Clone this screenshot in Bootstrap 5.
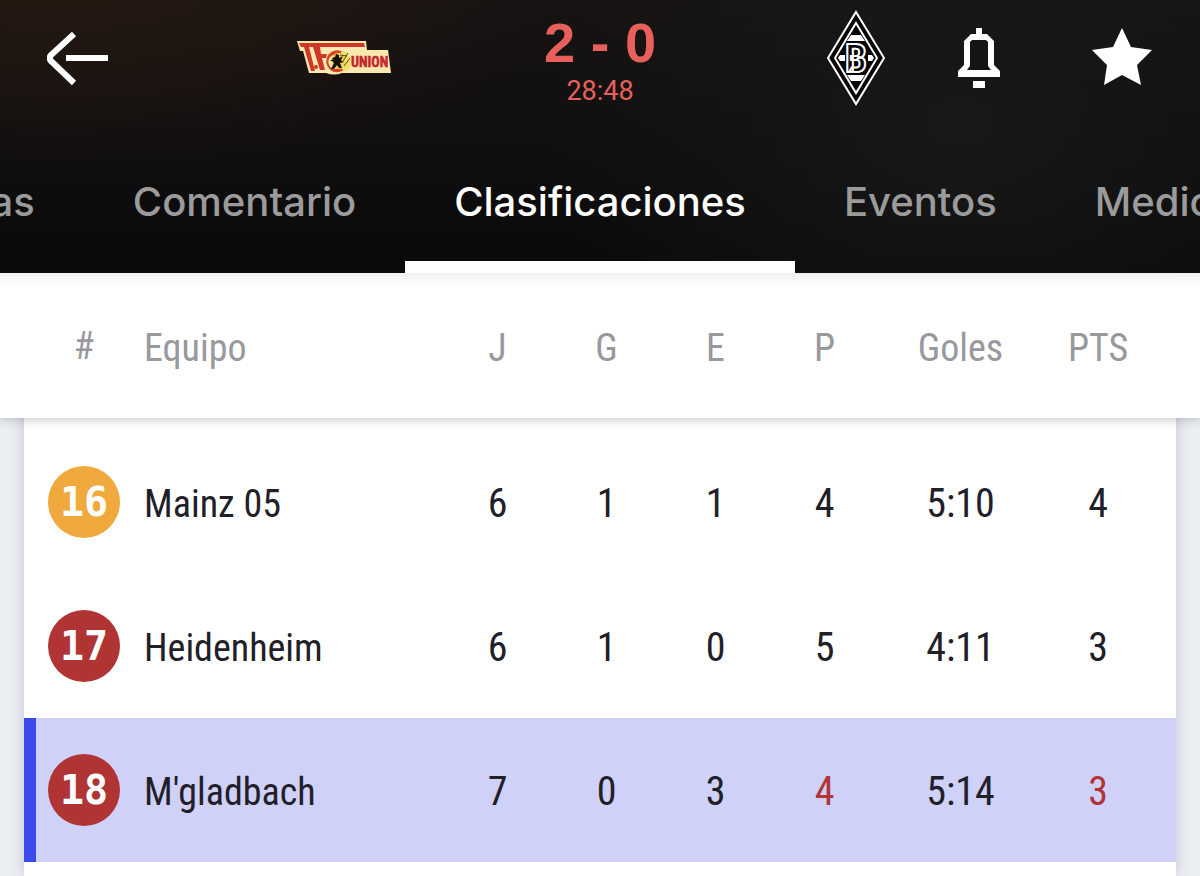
<!DOCTYPE html>
<html lang="es">
<head>
<meta charset="utf-8">
<meta name="viewport" content="width=device-width, initial-scale=1">
<title>Clasificaciones</title>
<link href="https://cdn.jsdelivr.net/npm/bootstrap@5.3.0/dist/css/bootstrap.min.css" rel="stylesheet">
<style>
  body { background: #ebeff4; font-family: Inter, Roboto, sans-serif; overflow-x: hidden; }
  .match-header {
    position: relative; z-index: 2;
    background:
      radial-gradient(ellipse 520px 200px at 5% -10%, #261910 0%, rgba(38,25,16,0) 100%),
      radial-gradient(ellipse 420px 300px at 80% 45%, #181818 0%, rgba(24,24,24,0) 100%),
      linear-gradient(#171313, #0a0a0b);
  }
  .match-bar { height: 132px; padding: 0 42px; }
  .match-bar > .side { flex: 1 1 0; height: 116px; }
  .icon-btn { width: 72px; height: 72px; padding: 0; border: 0; background: none; }
  .icon-pair { gap: 71px; }
  .team-logo { width: 96px; }
  .score-box { width: 416px; color: #e8605b; padding-top: 15px; }
  .score { font: 700 56px/56px "Liberation Sans", sans-serif; }
  .clock { font: 400 27px/40px Roboto, sans-serif; }
  .tab-side { flex: 1 1 0; min-width: 0; overflow: hidden; }
  .tab-link { flex: none; height: 141px; padding: 0 49px; line-height: 140px; font-size: 40px; font-weight: 500; color: #9b9b9b; text-decoration: none; white-space: nowrap; }
  .tab-link.active { color: #fff; box-shadow: inset 0 -12px #fff; }
  .standings-card { margin: 0 24px; background: #fff; box-shadow: 0 0 14px rgba(60,70,90,.22); }
  .standings { width: 100%; table-layout: fixed; font-family: "Roboto Condensed", "Liberation Sans Narrow", "Liberation Sans", sans-serif; font-size: 40px; line-height: 48px; color: #1f2028; text-align: center; }
  .standings th, .standings td { padding: 0; font-weight: 400; }
  .standings th { font-size: 38px; }
  .standings tr > :not(:first-child) { padding-top: 4px; }
  .standings thead tr { position: relative; z-index: 0; height: 145px; color: #98989d; }
  .standings thead th:first-child::before { content: ""; position: absolute; z-index: -1; inset: 0 -24px; background: linear-gradient(#f0eff1, #fff 12px); box-shadow: 0 2px 10px rgba(0,0,0,.2); }
  .standings tbody tr { height: 144px; }
  .standings tbody tr.first-row { height: 156px; }
  .standings .first-row > :first-child { padding-top: 12px; }
  .standings .first-row > :not(:first-child) { padding-top: 16px; }
  .standings .team { text-align: left; white-space: nowrap; }
  .standings .pts { padding-right: 22px; }
  .col-pos { width: 120px; }
  .col-num { width: 109px; }
  .col-goals { width: 163px; }
  .col-pts { width: 134px; }
  .rank { width: 72px; height: 72px; border-radius: 50%; color: #fff; background: #b03434; font: 700 40px/72px "DejaVu Sans Mono", monospace; margin: 0 auto; }
  .rank.playoff { background: #f0a93c; }
  .current { background: #cfd1f8; box-shadow: inset 12px 0 #3c4aec; }
  .live { color: #b03438; }
  .crest-text { font-family: "Roboto Condensed", "Liberation Sans Narrow", sans-serif; font-weight: 700; }
</style>
<script defer src="https://cdn.jsdelivr.net/npm/bootstrap@5.3.0/dist/js/bootstrap.bundle.min.js"></script>
</head>
<body class="d-flex flex-column min-vh-100">
<header class="match-header">
  <div class="match-bar d-flex">
    <div class="side d-flex align-items-center justify-content-between">
      <button class="icon-btn" type="button" aria-label="Volver">
        <svg width="72" height="72" viewBox="0 0 72 72" fill="none" stroke="#fff" stroke-width="6"><path d="M32 12 8 34v4l24 23M24 36h42" stroke-linejoin="bevel"/></svg>
      </button>
      <div class="team-logo">
        <svg width="96" height="40" viewBox="0 0 96 40" role="img" aria-label="1. FC Union Berlin">
          <path d="M1 3H70L71 12H92L95 35H46Q38 38 30 35H13L7 13H4Z" fill="#f9e9ae"/>
          <path d="M3 5H68L69 9H24L25 16H31L30 20H26L29 32H24L17 9H13L19 33H15L8 9H5Z" fill="#cf3829"/>
          <circle cx="20" cy="29" r="2" fill="#cf3829"/>
          <path d="M47 14A11 11 0 1 0 49 31L45 28A7 7 0 1 1 43 18Z" fill="#d4432b"/>
          <circle cx="43" cy="23" r="8" fill="#f5d646"/>
          <path d="M46 13Q53 14 54 23T48 33L45 30Q49 27 49 23T44 16Z" fill="#f1dc6c"/>
          <path d="M46 25l6-10M48 28l6-8M44 17l7 1" stroke="#5c4c12" stroke-width="1" fill="none"/>
          <path d="M36 20l3-1 1-3 3 1v3l4-2-2 4 2 2-3 1 2 5h-3l-2-3-3 4h-3l3-6-2-2h-2l3-2z" fill="#17130c"/>
          <text class="crest-text" x="55" y="29" font-size="14" fill="#c3262b" stroke="#c3262b" stroke-width=".5">UNION</text>
        </svg>
      </div>
    </div>
    <div class="score-box text-center">
      <div class="score">2 - 0</div>
      <div class="clock">28:48</div>
    </div>
    <div class="side d-flex align-items-center">
      <div class="team-logo text-center">
        <svg width="60" height="96" viewBox="0 0 60 96" role="img" aria-label="Borussia Mönchengladbach">
          <path d="M30 2 58 48 30 94 2 48Z" fill="#080808" stroke="#fff" stroke-width="2"/>
          <path d="M30 13 51 48 30 83 9 48Z" fill="#050505" stroke="#fff" stroke-width="2"/>
          <path d="M25 25H35L39 31H21ZM21 65H39L35 71H25ZM12 48l2-3h5v6h-5zM48 48l-2-3h-4v6h4z" fill="#fff"/>
          <text class="crest-text" x="30" y="62" text-anchor="middle" font-size="39" fill="#070707" stroke="#fff" stroke-width="2">B</text>
        </svg>
      </div>
      <div class="icon-pair d-flex ms-auto">
        <button class="icon-btn" type="button" aria-label="Notificaciones">
          <svg width="72" height="72" viewBox="0 0 72 72"><path d="M33 6h6v6h5l7 7v24l6 6v6H15v-6l6-6V19l7-7h5z" fill="#fff"/><path d="M29 18h14l2 2v24l3 4H24l3-4V20z" fill="#151515"/><path d="M30 59h12v7H30z" fill="#fff"/></svg>
        </button>
        <button class="icon-btn" type="button" aria-label="Favorito">
          <svg width="72" height="72" viewBox="0 0 72 72"><path d="M36 6 45 25 66 28 51 43 55 63 36 53 18 63 21 43 6 28 27 25Z" fill="#fff"/></svg>
        </button>
      </div>
    </div>
  </div>
  <nav class="d-flex" aria-label="Secciones del partido">
    <div class="tab-side d-flex justify-content-end">
      <a class="tab-link" href="#estadisticas">Estadísticas</a>
      <a class="tab-link" href="#comentario">Comentario</a>
    </div>
    <a class="tab-link active" href="#clasificaciones" aria-current="page">Clasificaciones</a>
    <div class="tab-side d-flex">
      <a class="tab-link" href="#eventos">Eventos</a>
      <a class="tab-link" href="#medios">Medios</a>
    </div>
  </nav>
</header>
<main id="clasificaciones" class="standings-card flex-grow-1">
  <table class="standings">
    <colgroup><col class="col-pos"><col><col class="col-num"><col class="col-num"><col class="col-num"><col class="col-num"><col class="col-goals"><col class="col-pts"></colgroup>
    <thead>
      <tr><th scope="col">#</th><th scope="col" class="team">Equipo</th><th scope="col">J</th><th scope="col">G</th><th scope="col">E</th><th scope="col">P</th><th scope="col">Goles</th><th scope="col" class="pts">PTS</th></tr>
    </thead>
    <tbody>
      <tr class="first-row"><td><div class="rank playoff">16</div></td><th scope="row" class="team">Mainz 05</th><td>6</td><td>1</td><td>1</td><td>4</td><td>5:10</td><td class="pts">4</td></tr>
      <tr><td><div class="rank">17</div></td><th scope="row" class="team">Heidenheim</th><td>6</td><td>1</td><td>0</td><td>5</td><td>4:11</td><td class="pts">3</td></tr>
      <tr class="current"><td><div class="rank">18</div></td><th scope="row" class="team">M'gladbach</th><td>7</td><td>0</td><td>3</td><td class="live">4</td><td>5:14</td><td class="pts live">3</td></tr>
    </tbody>
  </table>
</main>
</body>
</html>
